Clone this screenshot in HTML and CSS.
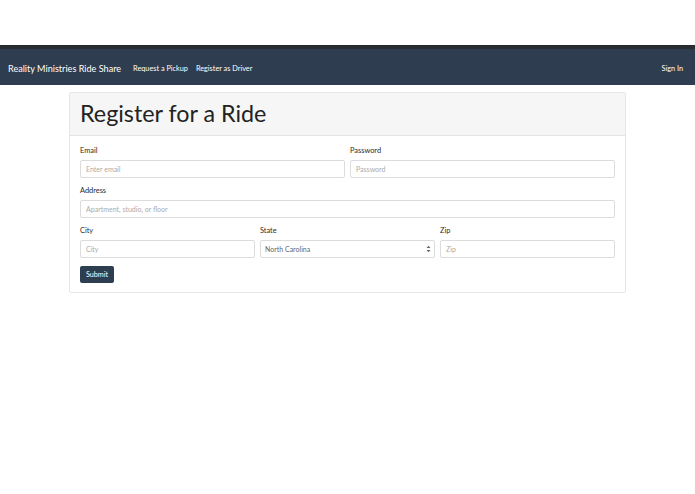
FILE: index.html
```html
<!DOCTYPE html>
<html>
<head>
<meta charset="utf-8">
<link rel="stylesheet" href="styles.css">
</head>
<body>
<div class="topspace"></div>
<div class="strip"></div>
<nav class="navbar">
  <div class="nav-left">
    <span class="brand">Reality Ministries Ride Share</span>
    <a class="nav-link">Request a Pickup</a>
    <a class="nav-link">Register as Driver</a>
  </div>
  <a class="nav-link signin">Sign In</a>
</nav>
<main class="container">
  <div class="card">
    <div class="card-header"><h1 class="title">Register for a Ride</h1></div>
    <form class="card-body">
      <div class="row two">
        <div class="group">
          <label class="label">Email</label>
          <input class="input" type="text" placeholder="Enter email">
        </div>
        <div class="group">
          <label class="label">Password</label>
          <input class="input" type="text" placeholder="Password">
        </div>
      </div>
      <div class="row one">
        <div class="group">
          <label class="label">Address</label>
          <input class="input" type="text" placeholder="Apartment, studio, or floor">
        </div>
      </div>
      <div class="row three">
        <div class="group">
          <label class="label">City</label>
          <input class="input" type="text" placeholder="City">
        </div>
        <div class="group">
          <label class="label">State</label>
          <div class="select">
            <span>North Carolina</span>
            <svg class="caret" width="5" height="8" viewBox="0 0 5 8"><path d="M0.5 3 L2.5 0.8 L4.5 3 Z M0.5 5 L2.5 7.2 L4.5 5 Z" fill="#666"/></svg>
          </div>
        </div>
        <div class="group">
          <label class="label">Zip</label>
          <input class="input" type="text" placeholder="Zip">
        </div>
      </div>
      <div class="actions"><button class="btn" type="button">Submit</button></div>
    </form>
  </div>
</main>
</body>
</html>
```
FILE: styles.css
```css
html, body {
  margin: 0;
  padding: 0;
  background: #fff;
  font-family: Lato, "Open Sans", sans-serif;
  color: #212529;
}
.topspace { height: 45px; }
.strip {
  height: 4px;
  background: linear-gradient(to bottom, #27292c, #2b2f36);
}
.navbar {
  box-sizing: border-box;
  height: 36px;
  background: #2e3d4f;
  display: flex;
  align-items: center;
  justify-content: space-between;
  padding: 3px 12px 0 8px;
}
.nav-left { display: flex; align-items: center; }
.brand {
  color: #fff;
  font-size: 9.1px;
  margin-right: 12px;
}
.nav-link {
  color: #fff;
  font-size: 7.3px;
  margin-right: 8px;
}
.signin { margin-right: 0; }
.container {
  box-sizing: border-box;
  width: 557px;
  margin: 7px auto 0;
}
.card {
  border: 1px solid #e6e6e6;
  border-radius: 2px;
}
.card-header {
  height: 42px;
  background: #f6f6f6;
  border-bottom: 1px solid #e3e3e3;
  display: flex;
  align-items: center;
  padding: 0 10px;
}
.title {
  margin: 0 0 1px;
  font-size: 23.3px;
  font-weight: 400;
  color: #222;
  line-height: 1;
}
.card-body {
  padding: 10px 10px 9px;
}
.row {
  display: grid;
  gap: 5px;
  margin-bottom: 8px;
}
.two { grid-template-columns: 1fr 1fr; }
.one { grid-template-columns: 1fr; }
.three { grid-template-columns: 1fr 1fr 1fr; }
.group { display: flex; flex-direction: column; }
.label {
  font-size: 7.4px;
  line-height: 10px;
  height: 10px;
  margin-bottom: 4px;
  color: #2a2a2a;
}
.input, .select {
  box-sizing: border-box;
  height: 18px;
  border: 1px solid #dcdcdc;
  border-radius: 2px;
  padding: 0 5px;
  font-family: Lato, "Open Sans", sans-serif;
  font-size: 7px;
  color: #555;
  background: #fff;
  width: 100%;
  margin: 0;
  outline: none;
}
.input::placeholder { color: #aaa; }
.select {
  display: flex;
  align-items: center;
  justify-content: space-between;
  padding: 0 3px 0 4px;
  color: #666;
}
.actions { display: flex; }
.btn {
  height: 17px;
  padding: 0 6px;
  background: #2c3e50;
  color: #fff;
  border: none;
  border-radius: 2px;
  font-family: Lato, "Open Sans", sans-serif;
  font-size: 7.2px;
}
```
